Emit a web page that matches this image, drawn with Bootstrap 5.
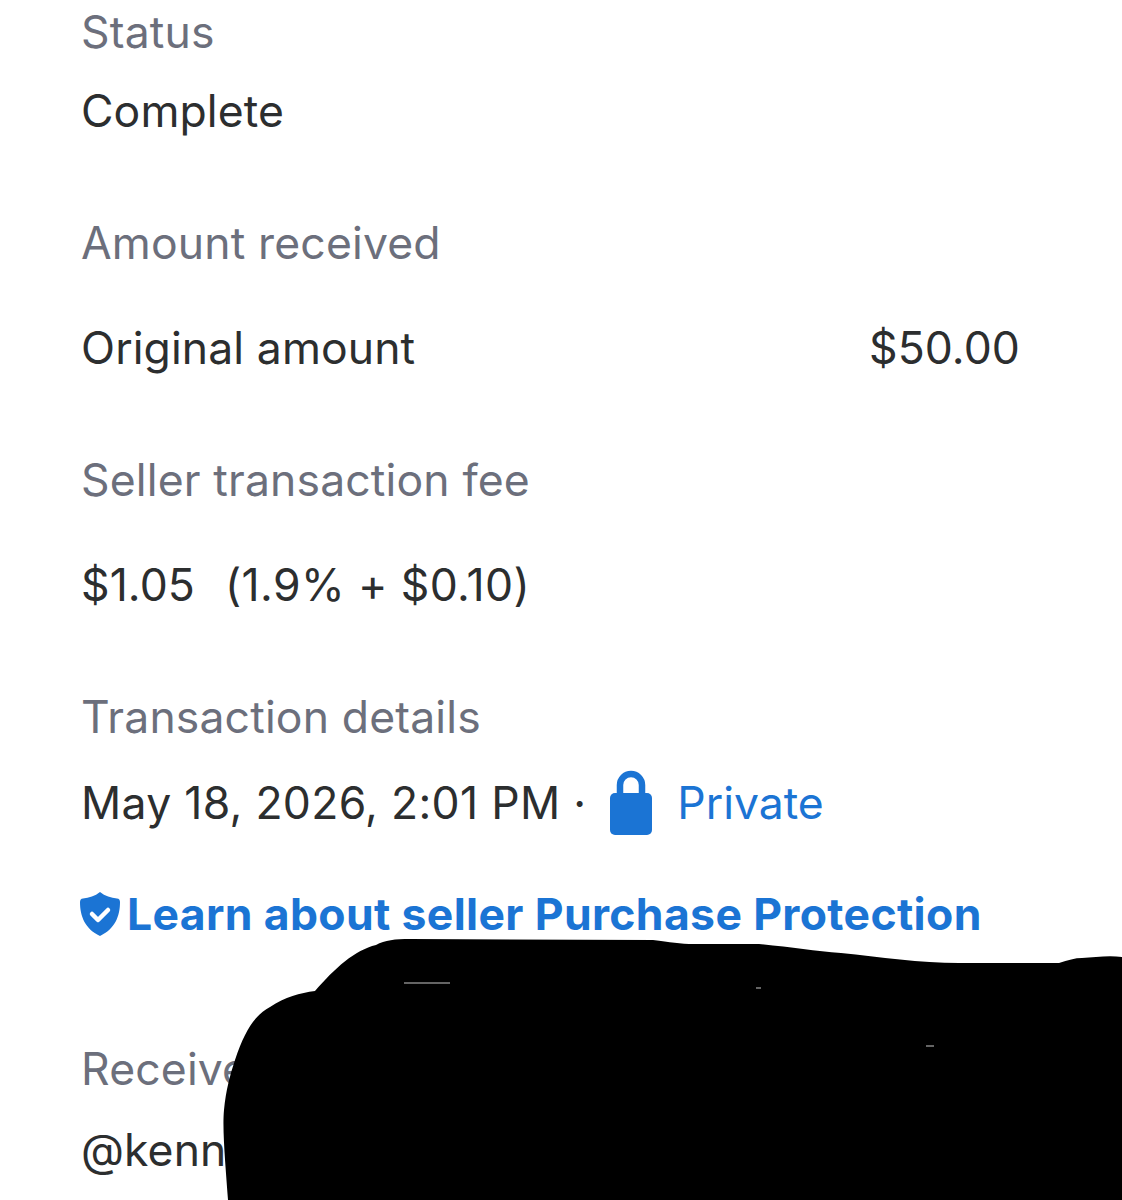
<!DOCTYPE html>
<html lang="en">
<head>
    <meta charset="UTF-8">
    <meta name="viewport" content="width=device-width, initial-scale=1.0">
    <title>Payment details</title>
    <link href="https://cdn.jsdelivr.net/npm/bootstrap@5.3.0/dist/css/bootstrap.min.css" rel="stylesheet">
    <style>
        body {
            background-color: #fff;
            font-family: "Inter", "Liberation Sans", sans-serif;
            font-size: 44.5px;
            line-height: 50px;
            letter-spacing: .1px;
            color: #2c2e2f;
            overflow: hidden;
        }
        .detail-page {
            height: 1200px;
            padding: 7px 102px 0 81px;
        }
        .detail-label {
            color: #6c6f7c;
            letter-spacing: .15px;
        }
        .detail-link {
            color: #1b74d4;
            text-decoration: none;
            letter-spacing: 0;
        }
        .gap-value { margin-top: 29px; }
        .gap-value-lg { margin-top: 55px; }
        .gap-section { margin-top: 82px; }
        .gap-date { margin-top: 28px; }
        .gap-learn { margin-top: 53px; }
        .gap-receive { margin-top: 105px; }
        .gap-handle { margin-top: 31px; }
        .fee-part { margin-left: 30px; letter-spacing: .4px; }
        .date-text { letter-spacing: .3px; }
        .lock-icon {
            width: 44px;
            height: 66px;
            margin: 0 24px 0 23px;
        }
        .shield-icon {
            width: 40px;
            height: 44px;
            margin: 0 7px 0 -1px;
        }
        .learn-text {
            font-weight: 700;
            letter-spacing: .35px;
        }
        .scribble {
            position: absolute;
            top: 0;
            left: 0;
            width: 1122px;
            height: 1200px;
        }
    </style>
</head>
<body>
    <div class="detail-page position-relative">
        <div class="detail-label">Status</div>
        <div class="gap-value">Complete</div>

        <div class="detail-label gap-section">Amount received</div>
        <div class="d-flex justify-content-between gap-value-lg">
            <span>Original amount</span>
            <span>$50.00</span>
        </div>

        <div class="detail-label gap-section">Seller transaction fee</div>
        <div class="gap-value-lg">$1.05<span class="fee-part">(1.9% + $0.10)</span></div>

        <div class="detail-label gap-section">Transaction details</div>
        <div class="d-flex align-items-center gap-date">
            <span class="date-text">May 18, 2026, 2:01 PM ·</span>
            <svg class="lock-icon" viewBox="0 0 44 66" aria-hidden="true">
                <path fill="none" stroke="#1b74d4" stroke-width="6.500" d="M11 30V15a11 11 0 0 1 22 0v15"/>
                <rect x="1" y="23" width="42" height="42" rx="5" fill="#1b74d4"/>
            </svg>
            <a class="detail-link" href="#">Private</a>
        </div>

        <div class="d-flex align-items-center gap-learn">
            <svg class="shield-icon" viewBox="0 0 40 44" aria-hidden="true">
                <path fill="#1b74d4" d="M20 0C25 4 31 6 37 6.500C39 6.700 40 8 40 10C40 24 35 37 20 44C5 37 0 24 0 10C0 8 1 6.700 3 6.500C9 6 15 4 20 0Z"/>
                <path fill="none" stroke="#fff" stroke-width="4.500" stroke-linecap="round" stroke-linejoin="round" d="M12 22l6 6 10-10"/>
            </svg>
            <a class="detail-link learn-text" href="#">Learn about seller Purchase Protection</a>
        </div>

        <div class="detail-label gap-receive">Receive</div>
        <div class="gap-handle">@kenn</div>

        <svg class="scribble" viewBox="0 0 1122 1200" aria-hidden="true">
            <path fill="#000" d="M228 1200C226 1170 222 1130 224 1110C226 1090 230 1075 235 1060C245 1030 255 1015 270 1007C285 997 300 993 315 991C335 968 355 950 376 945C385 940 395 939 410 939L653 940C670 942 680 944 694 944L759 944C790 947 815 951 841 953C880 957 920 963 959 963L1059 963C1068 960 1075 958 1082 958C1095 957 1110 955 1122 957V1200Z"/>
            <path fill="none" stroke="#c8c8c8" stroke-width="1" d="M404 983H450M756 988H761M926 1046H934"/>
        </svg>
    </div>
    <script src="https://cdn.jsdelivr.net/npm/bootstrap@5.3.0/dist/js/bootstrap.bundle.min.js"></script>
</body>
</html>
